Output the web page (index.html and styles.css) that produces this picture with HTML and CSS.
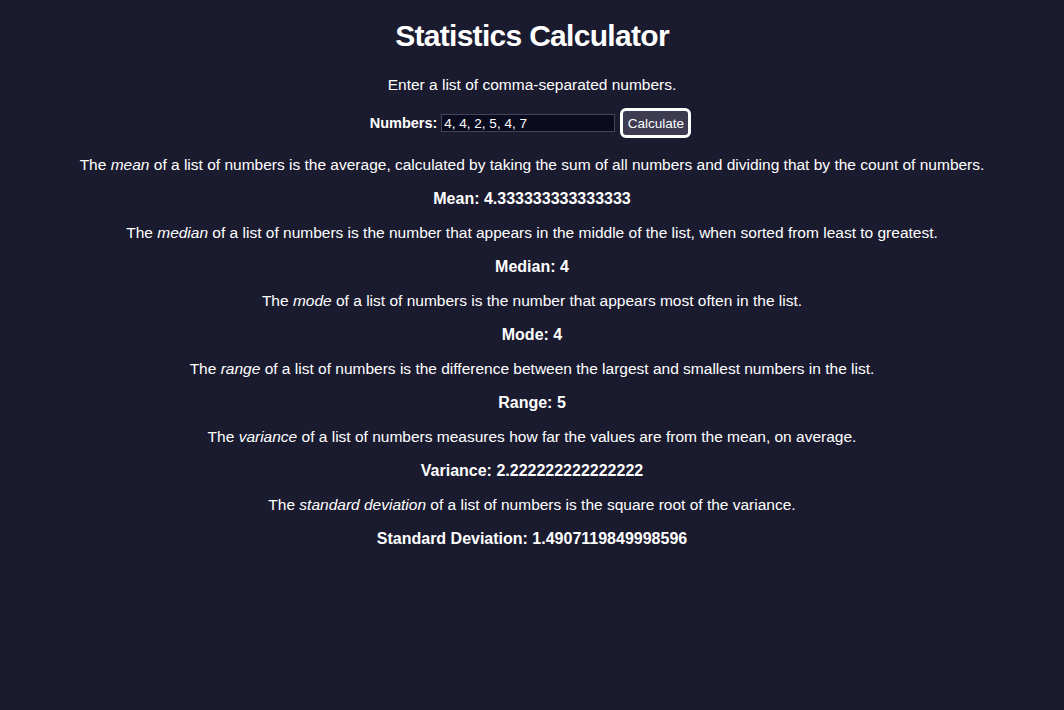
FILE: index.html
```html
<!DOCTYPE html>
<html>
<head>
<meta charset="utf-8">
<link rel="stylesheet" href="styles.css">
</head>
<body>
<main class="app">
  <h1 class="title">Statistics Calculator</h1>
  <p class="text intro">Enter a list of comma-separated numbers.</p>
  <div class="form">
    <label class="label" for="nums">Numbers:</label>
    <input class="input" id="nums" type="text" value="4, 4, 2, 5, 4, 7">
    <button class="btn">Calculate</button>
  </div>
  <p class="text">The <em>mean</em> of a list of numbers is the average, calculated by taking the sum of all numbers and dividing that by the count of numbers.</p>
  <p class="result">Mean: 4.333333333333333</p>
  <p class="text">The <em>median</em> of a list of numbers is the number that appears in the middle of the list, when sorted from least to greatest.</p>
  <p class="result">Median: 4</p>
  <p class="text">The <em>mode</em> of a list of numbers is the number that appears most often in the list.</p>
  <p class="result">Mode: 4</p>
  <p class="text">The <em>range</em> of a list of numbers is the difference between the largest and smallest numbers in the list.</p>
  <p class="result">Range: 5</p>
  <p class="text">The <em>variance</em> of a list of numbers measures how far the values are from the mean, on average.</p>
  <p class="result">Variance: 2.222222222222222</p>
  <p class="text">The <em>standard deviation</em> of a list of numbers is the square root of the variance.</p>
  <p class="result">Standard Deviation: 1.4907119849998596</p>
</main>
</body>
</html>
```
FILE: styles.css
```css
html, body {
  margin: 0;
  padding: 0;
  background: #1b1b30;
}
body {
  color: #ffffff;
  font-family: "Liberation Sans", Arial, sans-serif;
  font-size: 15.5px;
}
.app {
  text-align: center;
  padding-top: 1px;
}
.title {
  font-size: 30px;
  font-weight: bold;
  margin: 18px 0 23px;
  letter-spacing: -0.7px;
}
.text {
  margin: 16px 0;
  line-height: 18px;
}
.intro {
  margin-bottom: 14px;
}
.result {
  margin: 16px 0;
  line-height: 18px;
  font-weight: bold;
  font-size: 16px;
}
.form {
  display: flex;
  justify-content: center;
  align-items: center;
  gap: 4px;
  margin: 0 0 18px;
  padding-right: 3px;
}
.label {
  font-weight: bold;
  font-size: 14.5px;
}
.input {
  width: 168px;
  height: 14px;
  padding: 1px 2px;
  background: #0b0b1f;
  color: #ffffff;
  border: 1px solid #44445a;
  font-family: "Liberation Sans", Arial, sans-serif;
  font-size: 13.5px;
}
.btn {
  margin-left: 1px;
  width: 71px;
  height: 30px;
  background: #3d3b50;
  color: #ffffff;
  border: 3px solid #ffffff;
  border-radius: 6px;
  padding: 0;
  font-family: "Liberation Sans", Arial, sans-serif;
  font-size: 13.5px;
}
```
